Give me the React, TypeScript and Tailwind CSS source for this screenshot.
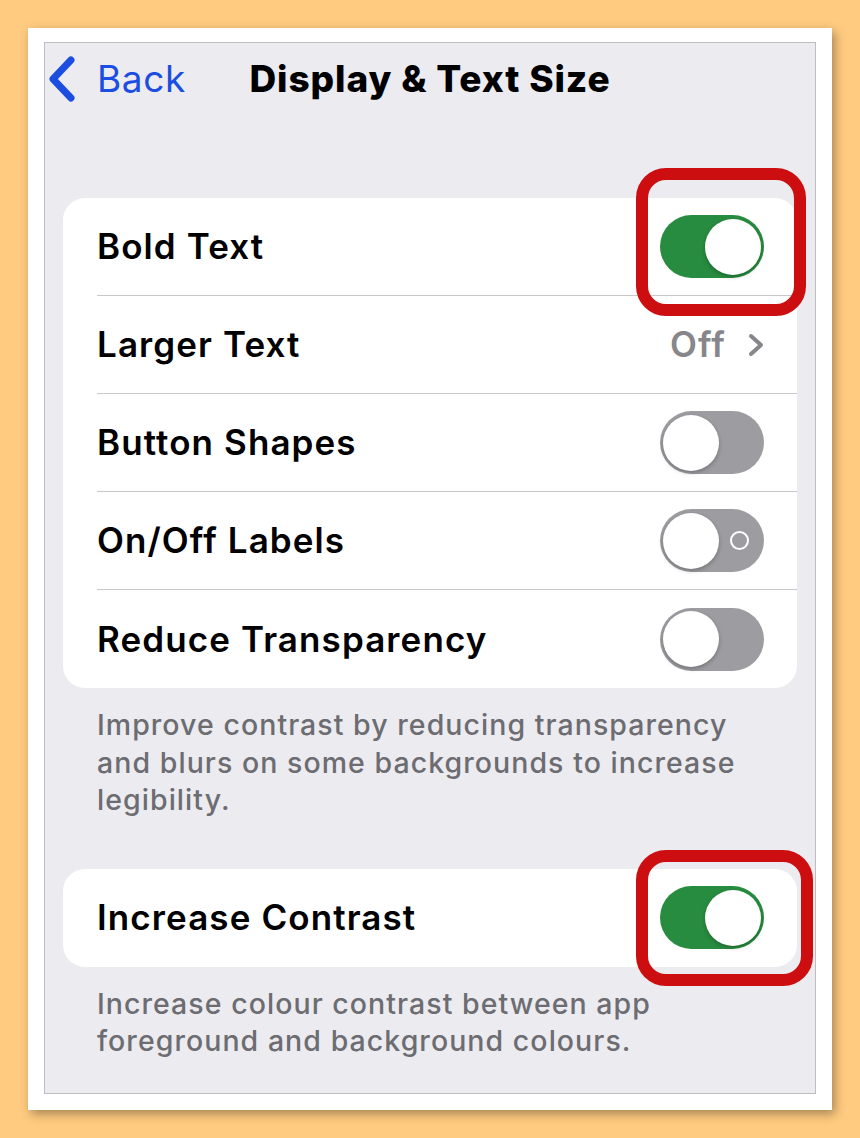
import React from "react";

const font = { fontFamily: "Inter, 'Noto Sans', 'Liberation Sans', sans-serif" };

function Toggle({ on, label }: { on: boolean; label?: boolean }) {
  return (
    <div
      className={
        "relative w-[104px] h-[63px] rounded-full shrink-0 " +
        (on ? "bg-[#288c40]" : "bg-[#9c9ca1]")
      }
    >
      {label && !on && (
        <div className="absolute left-[70px] top-[22px] w-[19px] h-[19px] rounded-full border-[2.5px] border-white" />
      )}
      <div
        className={
          "absolute top-[3.5px] w-[56px] h-[56px] rounded-full bg-white shadow-[0_2px_4px_rgba(0,0,0,0.25)] " +
          (on ? "left-[45px]" : "left-[3px]")
        }
      />
    </div>
  );
}

function Row({
  title,
  children,
  last,
}: {
  title: string;
  children: React.ReactNode;
  last?: boolean;
}) {
  return (
    <div className="pl-[34px]">
      <div
        className={
          "h-[98px] flex items-center justify-between pr-[33px] " +
          (last ? "" : "border-b border-[#c8c8cc]")
        }
      >
        <span className="text-[35px] font-semibold text-black tracking-[1.1px]">{title}</span>
        {children}
      </div>
    </div>
  );
}

export default function App() {
  return (
    <div
      className="w-[860px] h-[1138px] bg-[#ffcb80] pt-[28px] pl-[28px]"
      style={font}
    >
      <div className="w-[804px] h-[1082px] bg-white pt-[14px] px-[16px] pb-[16px] shadow-[3px_4px_10px_rgba(0,0,0,0.35)]">
        <div className="w-full h-full bg-[#ebebf0] border border-[#bdbdc1] relative">
          {/* nav */}
          <div className="h-[70px] mt-[1px] flex items-center relative">
            <div className="flex items-center pl-[1px]">
              <svg width="32" height="46" viewBox="0 0 32 46" className="mr-[19px]">
                <path
                  d="M25 4 L7 23 L25 42"
                  fill="none"
                  stroke="#1b4ee0"
                  strokeWidth="7"
                  strokeLinecap="round"
                  strokeLinejoin="round"
                />
              </svg>
              <span className="text-[37px] text-[#1b4ee0] font-normal tracking-[0.6px]">Back</span>
            </div>
            <div className="absolute left-0 right-0 text-center pointer-events-none">
              <span className="text-[37px] font-extrabold text-black tracking-[0.9px]">
                Display &amp; Text Size
              </span>
            </div>
          </div>

          {/* card 1 */}
          <div className="mx-[18px] mt-[84px] bg-white rounded-[22px]">
            <Row title="Bold Text">
              <div className="relative">
                <Toggle on />
                <div className="absolute left-[-24px] top-[-47px] w-[170px] h-[148px] border-[12px] border-[#cc0e10] rounded-[30px]" />
              </div>
            </Row>
            <Row title="Larger Text">
              <div className="flex items-center gap-[22px]">
                <span className="text-[35px] font-semibold text-[#86868b] tracking-[1.1px]">Off</span>
                <svg width="16" height="24" viewBox="0 0 16 24">
                  <path
                    d="M3 3 L13 12 L3 21"
                    fill="none"
                    stroke="#86868b"
                    strokeWidth="4"
                    strokeLinecap="round"
                    strokeLinejoin="round"
                  />
                </svg>
              </div>
            </Row>
            <Row title="Button Shapes">
              <Toggle on={false} />
            </Row>
            <Row title="On/Off Labels">
              <Toggle on={false} label />
            </Row>
            <Row title="Reduce Transparency" last>
              <Toggle on={false} />
            </Row>
          </div>

          <p className="pl-[52px] pr-[10px] mt-[18px] text-[28.5px] leading-[37.5px] font-medium text-[#6c6c71] tracking-[1.05px] whitespace-nowrap">
            Improve contrast by reducing transparency
            <br />
            and blurs on some backgrounds to increase
            <br />
            legibility.
          </p>

          {/* card 2 */}
          <div className="mx-[18px] mt-[50px] bg-white rounded-[22px]">
            <Row title="Increase Contrast" last>
              <div className="relative">
                <Toggle on />
                <div className="absolute left-[-24px] top-[-36px] w-[177px] h-[136px] border-[12px] border-[#cc0e10] rounded-[30px]" />
              </div>
            </Row>
          </div>

          <p className="pl-[52px] pr-[10px] mt-[18px] text-[28.5px] leading-[37.5px] font-medium text-[#6c6c71] tracking-[1.05px] whitespace-nowrap">
            Increase colour contrast between app
            <br />
            foreground and background colours.
          </p>
        </div>
      </div>
    </div>
  );
}
